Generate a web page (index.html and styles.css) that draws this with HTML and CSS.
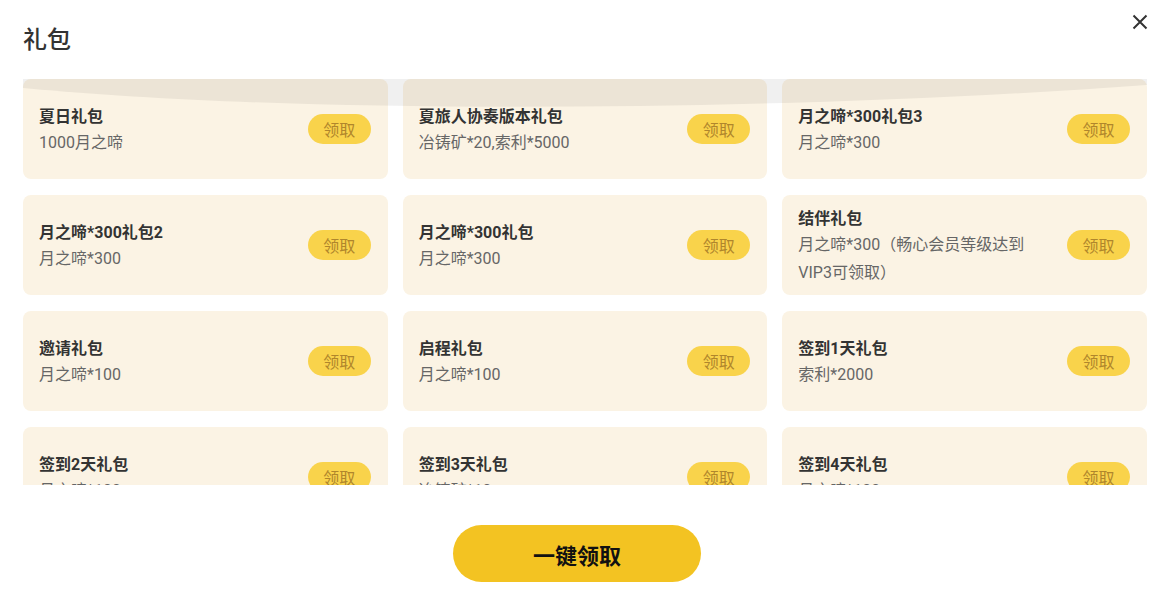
FILE: index.html
```html
<!DOCTYPE html>
<html lang="zh-CN">
  <head>
    <meta charset="UTF-8" />
    <meta name="viewport" content="width=device-width, initial-scale=1" />
    <title>礼包</title>
    <link rel="stylesheet" href="styles.css">
  </head>
  <body>
    <div class="dialog">
      <header>
        <h1 class="title">礼包</h1>
        <button class="close" title="关闭">
          <svg width="16" height="16" viewBox="0 0 16 16">
            <path d="M1.5 1.5 L14.5 14.5 M14.5 1.5 L1.5 14.5" stroke="#333" stroke-width="2" fill="none" />
          </svg>
        </button>
      </header>

      <div class="list-wrap">
        <div class="list">
          <div class="card">
            <div class="info">
              <div class="name">夏日礼包</div>
              <div class="desc">1000月之啼</div>
            </div>
            <button class="get">领取</button>
          </div>
          <div class="card">
            <div class="info">
              <div class="name">夏旅人协奏版本礼包</div>
              <div class="desc">冶铸矿*20,索利*5000</div>
            </div>
            <button class="get">领取</button>
          </div>
          <div class="card">
            <div class="info">
              <div class="name">月之啼*300礼包3</div>
              <div class="desc">月之啼*300</div>
            </div>
            <button class="get">领取</button>
          </div>

          <div class="card">
            <div class="info">
              <div class="name">月之啼*300礼包2</div>
              <div class="desc">月之啼*300</div>
            </div>
            <button class="get">领取</button>
          </div>
          <div class="card">
            <div class="info">
              <div class="name">月之啼*300礼包</div>
              <div class="desc">月之啼*300</div>
            </div>
            <button class="get">领取</button>
          </div>
          <div class="card">
            <div class="info">
              <div class="name">结伴礼包</div>
              <div class="desc">月之啼*300（畅心会员等级达到VIP3可领取）</div>
            </div>
            <button class="get">领取</button>
          </div>

          <div class="card">
            <div class="info">
              <div class="name">邀请礼包</div>
              <div class="desc">月之啼*100</div>
            </div>
            <button class="get">领取</button>
          </div>
          <div class="card">
            <div class="info">
              <div class="name">启程礼包</div>
              <div class="desc">月之啼*100</div>
            </div>
            <button class="get">领取</button>
          </div>
          <div class="card">
            <div class="info">
              <div class="name">签到1天礼包</div>
              <div class="desc">索利*2000</div>
            </div>
            <button class="get">领取</button>
          </div>

          <div class="card">
            <div class="info">
              <div class="name">签到2天礼包</div>
              <div class="desc">月之啼*100</div>
            </div>
            <button class="get">领取</button>
          </div>
          <div class="card">
            <div class="info">
              <div class="name">签到3天礼包</div>
              <div class="desc">冶铸矿*10</div>
            </div>
            <button class="get">领取</button>
          </div>
          <div class="card">
            <div class="info">
              <div class="name">签到4天礼包</div>
              <div class="desc">月之啼*100</div>
            </div>
            <button class="get">领取</button>
          </div>
        </div>

        <!-- overscroll glow -->
        <svg class="glow" viewBox="0 0 1124 30" preserveAspectRatio="none">
          <path d="M0 0 H1124 V6 C760 33 280 36 0 9 Z" fill="rgba(0,0,0,0.06)" />
        </svg>
      </div>

      <div class="footer">
        <button class="get-all">一键领取</button>
      </div>
    </div>
  </body>
</html>
```

FILE: styles.css
```css
* {
  box-sizing: border-box;
}

html,
body {
  background-color: #fff;
  color: #333;
  font-family: Roboto, "Noto Sans CJK SC", sans-serif;
  height: 100%;
  margin: 0;
  overflow: hidden;
}

button {
  font-family: inherit;
}

.dialog {
  padding: 0 14px 0 23px;
}

header {
  padding-top: 24px;
  position: relative;
}

.title {
  font-size: 24px;
  font-weight: 500;
  line-height: 32px;
  margin: 0 0 23px;
}

.close {
  background: none;
  border: none;
  cursor: pointer;
  padding: 0;
  position: absolute;
  right: -1px;
  top: 14px;
}

.close svg {
  display: block;
}

.list-wrap {
  height: 406px;
  overflow: hidden;
  position: relative;
}

.list {
  display: grid;
  gap: 16px 15px;
  grid-template-columns: repeat(3, 1fr);
}

.card {
  align-items: center;
  background-color: #fbf3e4;
  border-radius: 8px;
  display: flex;
  gap: 20px;
  height: 100px;
  padding: 0 17px 0 16px;
}

.info {
  flex: 1;
  min-width: 0;
  padding-top: 3px;
}

.name {
  color: #333;
  font-size: 16px;
  font-weight: 700;
  line-height: 24px;
}

.desc {
  color: #666;
  font-size: 16px;
  line-height: 28px;
}

.get {
  background-color: #f9d34b;
  border: none;
  border-radius: 15px;
  color: #b0862c;
  cursor: pointer;
  flex-shrink: 0;
  font-size: 16px;
  height: 30px;
  padding: 0;
  width: 63px;
}

.glow {
  display: block;
  height: 30px;
  left: 0;
  pointer-events: none;
  position: absolute;
  top: 0;
  width: 100%;
}

.footer {
  display: flex;
  justify-content: center;
  padding: 40px 16px 0 0;
}

.get-all {
  background-color: #f3c322;
  border: none;
  border-radius: 29px;
  color: #111;
  cursor: pointer;
  font-size: 22px;
  font-weight: 700;
  height: 57px;
  width: 248px;
}
```
